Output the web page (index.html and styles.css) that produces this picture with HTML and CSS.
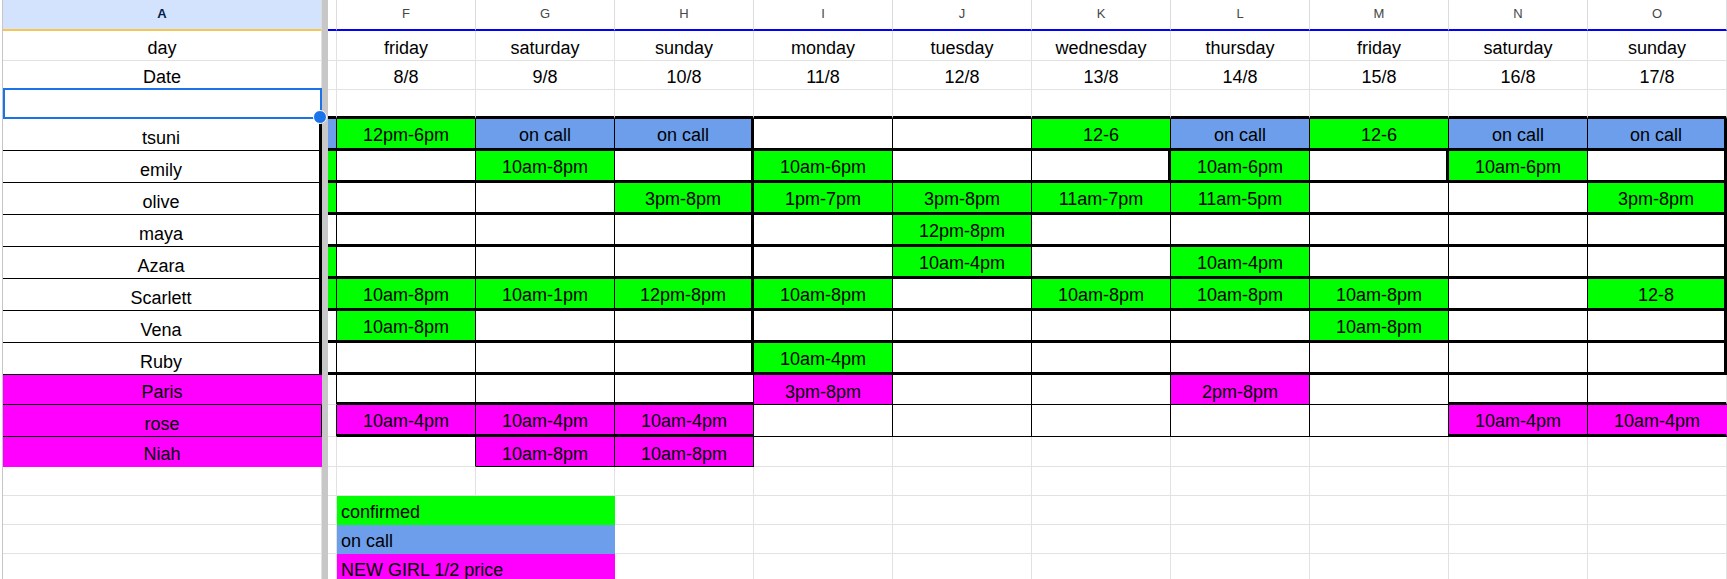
FILE: index.html
```html
<!DOCTYPE html>
<html lang="en">
<head>
<meta charset="utf-8">
<title>Roster</title>
<link rel="stylesheet" href="styles.css">
</head>
<body>
<div class="sheet">
  <div class="edge"></div>
  <div class="freeze"></div>

  <div class="row hdr">
    <div class="c sel">A</div><div class="c"></div>
    <div class="c">F</div><div class="c">G</div><div class="c">H</div><div class="c">I</div><div class="c">J</div>
    <div class="c">K</div><div class="c">L</div><div class="c">M</div><div class="c">N</div><div class="c">O</div>
  </div>

  <div class="row top">
    <div class="c">day</div><div class="c"></div>
    <div class="c">friday</div><div class="c">saturday</div><div class="c">sunday</div><div class="c">monday</div><div class="c">tuesday</div>
    <div class="c">wednesday</div><div class="c">thursday</div><div class="c">friday</div><div class="c">saturday</div><div class="c">sunday</div>
  </div>

  <div class="row top">
    <div class="c">Date</div><div class="c"></div>
    <div class="c">8/8</div><div class="c">9/8</div><div class="c">10/8</div><div class="c">11/8</div><div class="c">12/8</div>
    <div class="c">13/8</div><div class="c">14/8</div><div class="c">15/8</div><div class="c">16/8</div><div class="c">17/8</div>
  </div>

  <div class="row pre">
    <div class="c cur"></div><div class="c"></div>
    <div class="c"></div><div class="c"></div><div class="c"></div><div class="c"></div><div class="c"></div>
    <div class="c"></div><div class="c"></div><div class="c"></div><div class="c"></div><div class="c"></div>
  </div>

  <div class="row blk">
    <div class="c nm">tsuni</div><div class="c b"></div>
    <div class="c g">12pm-6pm</div><div class="c b">on call</div><div class="c b kr">on call</div><div class="c"></div><div class="c"></div>
    <div class="c g">12-6</div><div class="c b">on call</div><div class="c g">12-6</div><div class="c b">on call</div><div class="c b kr">on call</div>
  </div>

  <div class="row blk">
    <div class="c nm">emily</div><div class="c g"></div>
    <div class="c"></div><div class="c g">10am-8pm</div><div class="c kr"></div><div class="c g">10am-6pm</div><div class="c"></div>
    <div class="c kr"></div><div class="c g">10am-6pm</div><div class="c kr"></div><div class="c g">10am-6pm</div><div class="c kr"></div>
  </div>

  <div class="row blk">
    <div class="c nm">olive</div><div class="c g"></div>
    <div class="c"></div><div class="c"></div><div class="c g kr">3pm-8pm</div><div class="c g">1pm-7pm</div><div class="c g">3pm-8pm</div>
    <div class="c g">11am-7pm</div><div class="c g">11am-5pm</div><div class="c"></div><div class="c"></div><div class="c g kr">3pm-8pm</div>
  </div>

  <div class="row blk">
    <div class="c nm">maya</div><div class="c"></div>
    <div class="c"></div><div class="c"></div><div class="c kr"></div><div class="c"></div><div class="c g">12pm-8pm</div>
    <div class="c"></div><div class="c"></div><div class="c"></div><div class="c"></div><div class="c kr"></div>
  </div>

  <div class="row blk">
    <div class="c nm">Azara</div><div class="c g"></div>
    <div class="c"></div><div class="c"></div><div class="c kr"></div><div class="c"></div><div class="c g">10am-4pm</div>
    <div class="c"></div><div class="c g">10am-4pm</div><div class="c"></div><div class="c"></div><div class="c kr"></div>
  </div>

  <div class="row blk">
    <div class="c nm">Scarlett</div><div class="c g"></div>
    <div class="c g">10am-8pm</div><div class="c g">10am-1pm</div><div class="c g kr">12pm-8pm</div><div class="c g">10am-8pm</div><div class="c"></div>
    <div class="c g">10am-8pm</div><div class="c g">10am-8pm</div><div class="c g">10am-8pm</div><div class="c"></div><div class="c g kr">12-8</div>
  </div>

  <div class="row blk">
    <div class="c nm">Vena</div><div class="c"></div>
    <div class="c g">10am-8pm</div><div class="c"></div><div class="c kr"></div><div class="c"></div><div class="c"></div>
    <div class="c"></div><div class="c"></div><div class="c g">10am-8pm</div><div class="c"></div><div class="c kr"></div>
  </div>

  <div class="row blk">
    <div class="c nm">Ruby</div><div class="c"></div>
    <div class="c"></div><div class="c"></div><div class="c kr"></div><div class="c g">10am-4pm</div><div class="c"></div>
    <div class="c"></div><div class="c"></div><div class="c"></div><div class="c"></div><div class="c kr"></div>
  </div>

  <div class="row">
    <div class="c p tb">Paris</div><div class="c tr"></div>
    <div class="c tr kb"></div><div class="c tr kb"></div><div class="c tr kb"></div><div class="c p tr tb">3pm-8pm</div><div class="c tr tb"></div>
    <div class="c tr tb"></div><div class="c p tr tb">2pm-8pm</div><div class="c tr tb"></div><div class="c tr kb"></div><div class="c kb"></div>
  </div>

  <div class="row">
    <div class="c p tr tb">rose</div><div class="c tr"></div>
    <div class="c p tr kb">10am-4pm</div><div class="c p tr kb">10am-4pm</div><div class="c p tr kb">10am-4pm</div><div class="c tr tb"></div><div class="c tr tb"></div>
    <div class="c tr tb"></div><div class="c tr tb"></div><div class="c tr tb"></div><div class="c p tr kb">10am-4pm</div><div class="c p kb">10am-4pm</div>
  </div>

  <div class="row">
    <div class="c p">Niah</div><div class="c"></div>
    <div class="c tr"></div><div class="c p tr tb">10am-8pm</div><div class="c p tr tb">10am-8pm</div><div class="c"></div><div class="c"></div>
    <div class="c"></div><div class="c"></div><div class="c"></div><div class="c"></div><div class="c"></div>
  </div>

  <div class="row">
    <div class="c"></div><div class="c"></div>
    <div class="c"></div><div class="c"></div><div class="c"></div><div class="c"></div><div class="c"></div>
    <div class="c"></div><div class="c"></div><div class="c"></div><div class="c"></div><div class="c"></div>
  </div>

  <div class="row">
    <div class="c"></div><div class="c"></div>
    <div class="c g lg">confirmed</div><div class="c"></div><div class="c"></div><div class="c"></div>
    <div class="c"></div><div class="c"></div><div class="c"></div><div class="c"></div><div class="c"></div>
  </div>

  <div class="row">
    <div class="c"></div><div class="c"></div>
    <div class="c b lg">on call</div><div class="c"></div><div class="c"></div><div class="c"></div>
    <div class="c"></div><div class="c"></div><div class="c"></div><div class="c"></div><div class="c"></div>
  </div>

  <div class="row">
    <div class="c"></div><div class="c"></div>
    <div class="c p lg">NEW GIRL 1/2 price</div><div class="c"></div><div class="c"></div><div class="c"></div>
    <div class="c"></div><div class="c"></div><div class="c"></div><div class="c"></div><div class="c"></div>
  </div>
</div>
</body>
</html>
```

FILE: styles.css
```css
* { box-sizing: border-box; }
html, body { margin: 0; padding: 0; background: #fff; overflow: hidden; }
body { font-family: "Liberation Sans", Arial, sans-serif; }

.sheet {
  display: grid;
  grid-template-columns: 3px 319px 6px 9px repeat(10, 139px);
  grid-template-rows: 31px 30px 29px 29px repeat(8, 32px) 30px 32px 30px 29px 29px 29px 29px;
  width: 1727px;
  height: 579px;
  overflow: hidden;
}
.row { display: contents; }

.edge { grid-column: 1; grid-row: 1 / -1; background: #fff; border-right: 1px solid #c4c7c5; }
.freeze { grid-column: 3; grid-row: 1 / -1; background: #c7c7c7; }

.c {
  display: flex;
  align-items: flex-end;
  justify-content: center;
  min-width: 0;
  padding: 0 4px 2px;
  border-right: 1px solid #e2e2e2;
  border-bottom: 1px solid #e2e2e2;
  font-size: 18px;
  line-height: 20px;
  color: #000;
  white-space: nowrap;
}

.hdr > .c {
  align-items: center;
  padding: 0 0 2px;
  font-size: 13px;
  color: #444746;
  border-right-color: #dadce0;
  border-bottom: 2px solid #0000ff;
}
.hdr > .sel {
  background: #d3e3fd;
  color: #041e49;
  font-weight: 700;
  border-bottom-color: #f6c651;
}

.g { background: #00ff00; border-color: transparent; }
.b { background: #6d9eeb; border-color: transparent; }
.p { background: #ff00ff; border-color: transparent; }

.tr { border-right: 1px solid #000; }
.tb { border-bottom: 1px solid #000; }
.kb { border-bottom: 3px solid #000; padding-bottom: 3px; }

.pre > .c { border-bottom: 3px solid #000; }
.pre > .cur { border-bottom: 1px solid #000; position: relative; z-index: 2; }
.cur::before {
  content: "";
  position: absolute;
  left: 0;
  right: -1px;
  top: -2px;
  bottom: -1px;
  border: 2px solid #1a73e8;
}
.cur::after {
  content: "";
  position: absolute;
  right: -6px;
  bottom: -6px;
  width: 12px;
  height: 12px;
  border-radius: 50%;
  background: #1a73e8;
  border: 1px solid #fff;
}

.blk > .c { border-right: 1px solid #000; border-bottom: 3px solid #000; padding-bottom: 3px; }
.blk > .nm { border-right: 3px solid #000; border-bottom: 1px solid #000; padding-bottom: 2px; }
.blk > .kr { border-right-width: 3px; }

.lg { grid-column: span 2; justify-content: flex-start; padding-left: 4px; }
```
